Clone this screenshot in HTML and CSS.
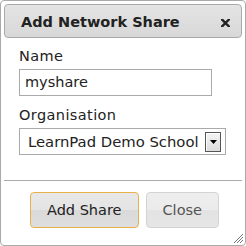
FILE: index.html
```html
<!DOCTYPE html>
<html>
<head>
<meta charset="utf-8">
<link rel="stylesheet" href="styles.css">
</head>
<body>
<div class="dialog">
  <div class="titlebar">
    <span class="title">Add Network Share</span>
    <span class="close-x"><svg width="9" height="8" viewBox="0 0 9 8"><path d="M1 0.5 L8 7.5 M8 0.5 L1 7.5" stroke="#222" stroke-width="2.4" stroke-linecap="square"/></svg></span>
  </div>
  <div class="content">
    <label class="label">Name</label>
    <div class="input">myshare</div>
    <label class="label">Organisation</label>
    <div class="select"><span class="select-text">LearnPad Demo School</span><span class="arrow"><svg width="7" height="4" viewBox="0 0 7 4"><path d="M0 0 H7 L3.5 4 Z" fill="#000"/></svg></span></div>
  </div>
  <div class="buttonpane">
    <button class="btn btn-focus">Add Share</button>
    <button class="btn">Close</button>
  </div>
  <span class="resize"><svg width="12" height="12" viewBox="0 0 12 12"><path d="M11 2 L2 11 M11 5 L5 11 M11 8 L8 11" stroke="#777" stroke-width="1"/></svg></span>
</div>
</body>
</html>
```
FILE: styles.css
```css
html, body {
  margin: 0;
  padding: 0;
  background: #fff;
}
body {
  font-family: "DejaVu Sans", Verdana, sans-serif;
  font-size: 14.5px;
  color: #222;
}
.dialog {
  position: relative;
  box-sizing: border-box;
  width: 246px;
  height: 246px;
  border: 1px solid #aaa;
  border-radius: 4px;
  padding: 3px;
  background: #fff;
  display: flex;
  flex-direction: column;
}
.titlebar {
  box-sizing: border-box;
  height: 34px;
  border: 1px solid #aaa;
  border-radius: 4px;
  background: linear-gradient(#e4e4e4, #d8d8d8);
  padding: 9px 10px 6px 16px;
  display: flex;
  align-items: flex-start;
  justify-content: space-between;
  line-height: 17px;
}
.title {
  font-weight: bold;
  color: #222;
}
.close-x {
  display: flex;
  margin-top: 5px;
  margin-right: 1px;
}
.content {
  padding: 10px 0 0 15px;
  display: flex;
  flex-direction: column;
  align-items: flex-start;
}
.label {
  line-height: 17px;
  margin-bottom: 4px;
  color: #222;
  letter-spacing: 0.4px;
}
.input {
  box-sizing: border-box;
  width: 193px;
  height: 27px;
  border: 1px solid #aaa;
  padding: 4px 5px;
  line-height: 17px;
  margin-bottom: 11px;
}
.select {
  box-sizing: border-box;
  width: 207px;
  height: 27px;
  border: 1px solid #aaa;
  padding: 0 4px 0 8px;
  display: flex;
  align-items: center;
  justify-content: space-between;
  line-height: 17px;
  font-size: 14.8px;
}
.arrow {
  box-sizing: border-box;
  width: 16px;
  height: 20px;
  border: 1px solid #555;
  background: linear-gradient(#f4f4f4, #dcdcdc);
  box-shadow: inset 1px 1px 0 #fff;
  display: flex;
  align-items: center;
  justify-content: center;
}
.arrow svg { display: block; }
.buttonpane {
  margin-top: 25px;
  border-top: 1px solid #aaa;
  padding: 11px 23px 0 0;
  display: flex;
  justify-content: flex-end;
  gap: 7px;
}
.btn {
  box-sizing: border-box;
  height: 36px;
  font-family: "DejaVu Sans", Verdana, sans-serif;
  font-size: 14.5px;
  line-height: 17px;
  padding: 0 16px;
  border-radius: 4px;
  border: 1px solid #d3d3d3;
  background: linear-gradient(#eeeeee 0%, #ebebeb 50%, #e3e3e3 51%, #e6e6e6 100%);
  color: #555;
  cursor: pointer;
}
.btn-focus {
  border-color: #e9b04a;
  color: #222;
  background: linear-gradient(#e8e8e8 0%, #e4e4e4 50%, #dadada 51%, #dedede 100%);
}
.resize {
  position: absolute;
  right: 1px;
  bottom: 1px;
  display: flex;
}
```
